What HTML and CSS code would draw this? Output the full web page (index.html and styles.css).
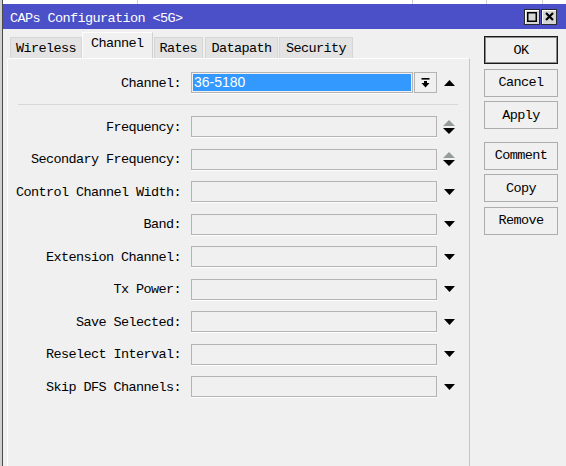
FILE: index.html
```html
<!DOCTYPE html>
<html>
<head>
<meta charset="utf-8">
<link rel="stylesheet" href="styles.css">
</head>
<body>
<div class="screen">
  <div class="edge"></div>
  <div class="frame">
    <div class="strip"><span class="c1"></span><span class="c2"></span><span class="c3"></span><span class="c4"></span><span class="c5"></span></div>
    <div class="titlebar">
      <span class="title">CAPs Configuration &lt;5G&gt;</span>
      <div class="wbtns">
        <span class="wbtn"><svg width="10" height="10" viewBox="0 0 10 10"><rect x="0.75" y="0.75" width="8.5" height="8.5" fill="none" stroke="#000" stroke-width="1.5"/></svg></span>
        <span class="wbtn"><svg width="9" height="9" viewBox="0 0 9 9"><path d="M1 1 L8 8 M8 1 L1 8" stroke="#000" stroke-width="2.2" fill="none"/></svg></span>
      </div>
    </div>
    <div class="body">
      <div class="left">
        <div class="tabs">
          <span class="tab">Wireless</span>
          <span class="tab active">Channel</span>
          <span class="tab">Rates</span>
          <span class="tab wide">Datapath</span>
          <span class="tab wider">Security</span>
        </div>
        <div class="panel">
          <div class="row">
            <span class="lbl">Channel:</span>
            <div class="field short"><div class="hl">36-5180</div></div>
            <div class="ddbtn"><svg width="9" height="10" viewBox="0 0 9 10"><rect x="0.5" y="0" width="8" height="1.6" fill="#000"/><rect x="3" y="3" width="3" height="2.5" fill="#000"/><polygon points="0.5,5 8.5,5 4.5,9.5" fill="#000"/></svg></div>
            <span class="ico"><svg width="11" height="6" viewBox="0 0 11 6"><polygon points="0,6 11,6 5.5,0" fill="#000"/></svg></span>
          </div>
          <div class="sep"></div>
          <div class="rows">
            <div class="row">
              <span class="lbl">Frequency:</span>
              <div class="field"></div>
              <span class="ico"><svg width="12" height="14" viewBox="0 0 12 14"><polygon points="0,6 12,6 6,0" fill="#939c97"/><polygon points="0,8 12,8 6,14" fill="#000"/></svg></span>
            </div>
            <div class="row">
              <span class="lbl">Secondary Frequency:</span>
              <div class="field"></div>
              <span class="ico"><svg width="12" height="14" viewBox="0 0 12 14"><polygon points="0,6 12,6 6,0" fill="#939c97"/><polygon points="0,8 12,8 6,14" fill="#000"/></svg></span>
            </div>
            <div class="row">
              <span class="lbl">Control Channel Width:</span>
              <div class="field"></div>
              <span class="ico"><svg width="11" height="6" viewBox="0 0 11 6"><polygon points="0,0 11,0 5.5,6" fill="#000"/></svg></span>
            </div>
            <div class="row">
              <span class="lbl">Band:</span>
              <div class="field"></div>
              <span class="ico"><svg width="11" height="6" viewBox="0 0 11 6"><polygon points="0,0 11,0 5.5,6" fill="#000"/></svg></span>
            </div>
            <div class="row">
              <span class="lbl">Extension Channel:</span>
              <div class="field"></div>
              <span class="ico"><svg width="11" height="6" viewBox="0 0 11 6"><polygon points="0,0 11,0 5.5,6" fill="#000"/></svg></span>
            </div>
            <div class="row">
              <span class="lbl">Tx Power:</span>
              <div class="field"></div>
              <span class="ico"><svg width="11" height="6" viewBox="0 0 11 6"><polygon points="0,0 11,0 5.5,6" fill="#000"/></svg></span>
            </div>
            <div class="row">
              <span class="lbl">Save Selected:</span>
              <div class="field"></div>
              <span class="ico"><svg width="11" height="6" viewBox="0 0 11 6"><polygon points="0,0 11,0 5.5,6" fill="#000"/></svg></span>
            </div>
            <div class="row">
              <span class="lbl">Reselect Interval:</span>
              <div class="field"></div>
              <span class="ico"><svg width="11" height="6" viewBox="0 0 11 6"><polygon points="0,0 11,0 5.5,6" fill="#000"/></svg></span>
            </div>
            <div class="row">
              <span class="lbl">Skip DFS Channels:</span>
              <div class="field"></div>
              <span class="ico"><svg width="11" height="6" viewBox="0 0 11 6"><polygon points="0,0 11,0 5.5,6" fill="#000"/></svg></span>
            </div>
          </div>
        </div>
      </div>
      <div class="side">
        <div class="btn def">OK</div>
        <div class="btn">Cancel</div>
        <div class="btn">Apply</div>
        <div class="btn gap">Comment</div>
        <div class="btn">Copy</div>
        <div class="btn">Remove</div>
      </div>
    </div>
  </div>
</div>
</body>
</html>
```

FILE: styles.css
```css
* { box-sizing: border-box; }
html, body { margin: 0; padding: 0; }
body {
  width: 566px;
  height: 466px;
  overflow: hidden;
  background: #f0f0f0;
  font-family: "Liberation Mono", "Courier New", monospace;
  font-size: 13.5px;
  letter-spacing: -0.6px;
  color: #000;
}
.screen { display: flex; width: 566px; height: 466px; }
.edge { width: 2px; background: #d0d0d0; flex: none; }
.frame {
  flex: 1;
  min-width: 0;
  display: flex;
  flex-direction: column;
  border-left: 1px solid #4a4a4a;
}
.strip { height: 4px; display: flex; background: #fff; flex: none; }
.strip span { border-right: 1px solid #cfcfcf; }
.strip .c1 { width: 135px; }
.strip .c2 { width: 275px; }
.strip .c3 { width: 74px; }
.strip .c4 { width: 56px; }
.strip .c5 { flex: 1; border-right: none; }

.titlebar {
  height: 25px;
  flex: none;
  background: #4b4fc8;
  color: #fff;
  display: flex;
  align-items: center;
  padding: 0 9px 0 7px;
}
.title { flex: 1; padding-top: 3px; }
.wbtns { display: flex; gap: 1px; }
.wbtn {
  width: 16px;
  height: 16px;
  border: 1px solid #2a2a2a;
  background: #d6d6d6;
  box-shadow: inset 1px 1px 0 #fff;
  display: flex;
  align-items: center;
  justify-content: center;
}

.body { flex: 1; display: flex; }
.left { width: 467px; flex: none; display: flex; flex-direction: column; }
.tabs {
  height: 29px;
  flex: none;
  display: flex;
  align-items: flex-end;
  padding-left: 7px;
}
.tab {
  height: 21px;
  padding: 0 5px;
  margin-left: 1px;
  background: #e3e3e3;
  border: 1px solid #d6d6d6;
  border-bottom: none;
  display: flex;
  align-items: center;
  white-space: pre;
}
.tab:first-child { margin-left: 0; }
.tab.wide { margin-left: 2px; padding: 0 5.5px; }
.tab.wider { padding: 0 6px; }
.tab.active {
  height: 26px;
  margin-left: 0;
  padding: 3px 8px 0 8px;
  align-items: flex-start;
  background: #f0f0f0;
  border-color: #cfcfcf;
  border-top-color: #fdfdfd;
  border-left-color: #fdfdfd;
}
.panel {
  flex: 1;
  margin-left: 4px;
  border-top: 1px solid #fdfdfd;
  border-left: 1px solid #fbfbfb;
  border-right: 1px solid #c6c6c6;
  padding-top: 13px;
  display: flex;
  flex-direction: column;
}
.rows { display: flex; flex-direction: column; gap: 11.5px; }
.row { display: flex; align-items: center; height: 21px; }
.lbl { width: 173px; margin-right: 10px; padding-top: 1px; text-align: right; white-space: pre; flex: none; }
.field {
  width: 246px;
  height: 21px;
  flex: none;
  border: 1px solid #b4b4b4;
  background: #f0f0f0;
  box-shadow: 0 1px 0 #fdfdfd;
}
.field.short { width: 222px; padding: 1px; }
.hl {
  height: 100%;
  background: #3399ff;
  color: #fff;
  font-family: "Liberation Sans", Arial, sans-serif;
  font-size: 14px;
  letter-spacing: 0;
  line-height: 17px;
  padding-left: 1px;
}
.ddbtn {
  width: 23px;
  height: 21px;
  flex: none;
  margin-left: 1px;
  border: 1px solid #b4b4b4;
  background: #f0f0f0;
  display: flex;
  align-items: center;
  justify-content: center;
}
.ico { width: 12px; margin-left: 6px; display: flex; justify-content: center; align-items: center; }
.sep { height: 1px; background: #d8d8d8; margin: 11px 11px 11px 10px; }

.side {
  flex: 1;
  padding: 7px 0 0 14px;
  display: flex;
  flex-direction: column;
  gap: 4.5px;
}
.btn {
  width: 74px;
  height: 28px;
  border: 1px solid #adadad;
  background: #f0f0f0;
  display: flex;
  align-items: center;
  justify-content: center;
}
.btn.def { border-color: #1a1a1a; box-shadow: inset 0 0 0 1px #8a8a8a; }
.btn.gap { margin-top: 8px; }
```
